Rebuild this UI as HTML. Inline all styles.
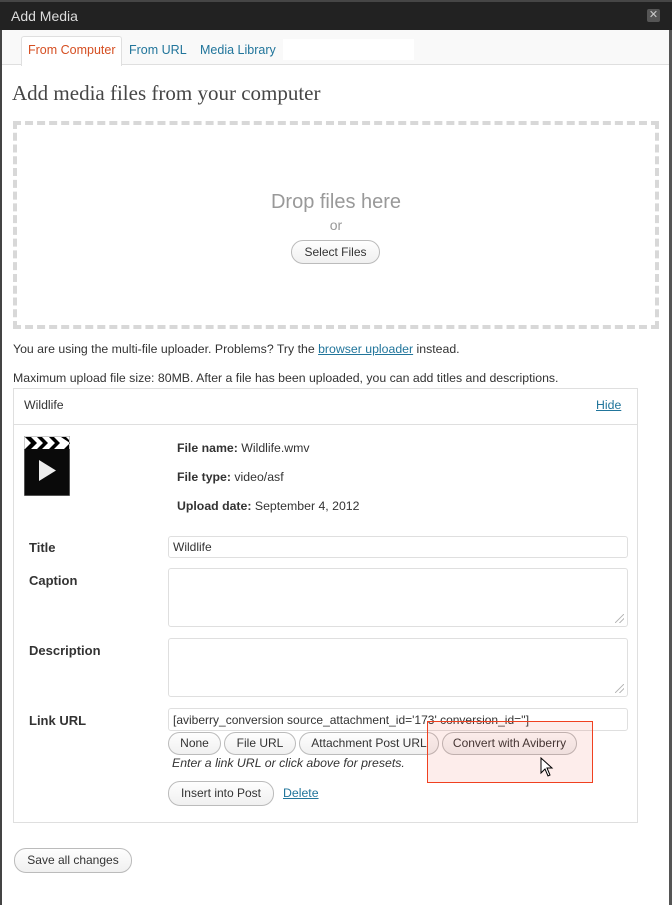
<!DOCTYPE html>
<html><head><meta charset="utf-8"><style>
*{box-sizing:border-box;margin:0;padding:0}
body{width:672px;height:905px;background:#fff;position:relative;overflow:hidden;font-family:"Liberation Sans",Arial,sans-serif;font-size:12.3px;color:#333}
.a{position:absolute}
.btn{position:absolute;height:23px;border:1px solid #bbb;border-radius:12px;background:linear-gradient(#fefefe,#f0f0f0);font-size:12px;color:#333;text-align:center;line-height:21px;white-space:nowrap}
.inp{position:absolute;border:1px solid #dfdfdf;border-radius:3px;background:#fff}
.lbl{position:absolute;left:29px;font-weight:bold;font-size:13px;color:#333}
a{color:#21759b}
.grip{position:absolute;right:3px;bottom:3px;width:9px;height:9px;background:linear-gradient(135deg,transparent 45%,#bbb 45%,#bbb 55%,transparent 55%,transparent 70%,#bbb 70%,#bbb 80%,transparent 80%)}
</style></head><body>
<div class="a" style="left:0;top:0;width:672px;height:905px;border-left:2px solid #444;border-right:3px solid #555"></div>
<div class="a" style="left:0;top:0;width:672px;height:30px;background:#222;border-top:2px solid #464646"></div>
<div class="a" style="left:11px;top:8px;color:#ddd;font-size:14px">Add Media</div>
<div class="a" style="left:647px;top:9px;width:13px;height:13px;background:#555;border-radius:2px;color:#ccc;font-size:11px;line-height:13px;text-align:center">✕</div>
<div class="a" style="left:2px;top:30px;width:667px;height:35px;background:#f9f9f9;border-bottom:1px solid #dfdfdf"></div>
<div class="a" style="left:21px;top:36px;width:101px;height:30px;background:#fff;border:1px solid #dfdfdf;border-bottom:none;border-radius:3px 3px 0 0"></div>
<div class="a" style="left:28px;top:43px;color:#d54e21;font-size:12.5px">From Computer</div>
<div class="a" style="left:129px;top:43px;color:#21759b;font-size:12.5px">From URL</div>
<div class="a" style="left:200px;top:43px;color:#21759b;font-size:12.5px">Media Library</div>
<div class="a" style="left:283px;top:39px;width:131px;height:21px;background:#fff"></div>
<div class="a" style="left:12px;top:81px;font-family:'Liberation Serif',Georgia,serif;font-size:21px;color:#464646">Add media files from your computer</div>
<div class="a" style="left:13px;top:121px;width:646px;height:208px;border:4px dashed #d8d8d8"></div>
<div class="a" style="left:13px;top:191px;width:646px;text-align:center;font-size:20px;color:#999">Drop files here</div>
<div class="a" style="left:13px;top:217px;width:646px;text-align:center;font-size:14px;color:#999">or</div>
<div class="btn" style="left:291px;top:240px;width:89px;height:24px;line-height:22px">Select Files</div>
<div class="a" style="left:13px;top:342px">You are using the multi-file uploader. Problems? Try the <a href="#">browser uploader</a> instead.</div>
<div class="a" style="left:13px;top:371px">Maximum upload file size: 80MB. After a file has been uploaded, you can add titles and descriptions.</div>
<div class="a" style="left:13px;top:388px;width:625px;height:435px;border:1px solid #dfdfdf"></div>
<div class="a" style="left:14px;top:424px;width:623px;height:1px;background:#dfdfdf"></div>
<div class="a" style="left:24px;top:398px">Wildlife</div>
<div class="a" style="left:596px;top:398px"><a href="#">Hide</a></div>
<svg class="a" style="left:24px;top:436px" width="46" height="60" viewBox="0 0 46 60">
<rect x="0" y="0" width="46" height="60" fill="#111" stroke="#999" stroke-width="1"/>
<rect x="0.5" y="0.5" width="45" height="13" fill="#fff"/>
<path d="M1 1h6l6 6-6 6H1l6-6z M13 1h5l6 6-6 6h-5l6-6z M25 1h5l6 6-6 6h-5l6-6z M37 1h5l3 3v9h-5l6-6z" fill="#000"/>
<rect x="0.5" y="13" width="45" height="46.5" fill="#0a0a0a"/>
<path d="M15 24v21l17-10.5z" fill="#eee"/>
</svg>
<div class="a" style="left:177px;top:441px"><b>File name:</b> Wildlife.wmv</div>
<div class="a" style="left:177px;top:470px"><b>File type:</b> video/asf</div>
<div class="a" style="left:177px;top:499px"><b>Upload date:</b> September 4, 2012</div>
<div class="lbl" style="top:540px">Title</div>
<div class="inp" style="left:168px;top:536px;width:460px;height:22px;padding:3px 4px;font-size:12px">Wildlife</div>
<div class="lbl" style="top:573px">Caption</div>
<div class="inp" style="left:168px;top:568px;width:460px;height:59px"><div class="grip"></div></div>
<div class="lbl" style="top:643px">Description</div>
<div class="inp" style="left:168px;top:638px;width:460px;height:59px"><div class="grip"></div></div>
<div class="lbl" style="top:713px">Link URL</div>
<div class="inp" style="left:168px;top:708px;width:460px;height:23px;padding:4px 4px;font-size:12px;white-space:nowrap;overflow:hidden">[aviberry_conversion source_attachment_id='173' conversion_id='']</div>
<div class="btn" style="left:168px;top:732px;width:53px">None</div>
<div class="btn" style="left:224px;top:732px;width:72px">File URL</div>
<div class="btn" style="left:299px;top:732px;width:140px">Attachment Post URL</div>
<div class="btn" style="left:442px;top:732px;width:135px">Convert with Aviberry</div>
<div class="a" style="left:427px;top:721px;width:166px;height:62px;border:1px solid #f04020;background:rgba(240,80,60,0.1)"></div>
<svg class="a" style="left:540px;top:757px" width="14" height="22" viewBox="0 0 14 22"><path d="M1 1v15l4-4 3 7 2-1-3-7h5z" fill="#fff" stroke="#000" stroke-width="1"/></svg>
<div class="a" style="left:172px;top:756px;font-style:italic">Enter a link URL or click above for presets.</div>
<div class="btn" style="left:168px;top:781px;width:106px;height:25px;line-height:23px">Insert into Post</div>
<div class="a" style="left:283px;top:786px"><a href="#">Delete</a></div>
<div class="btn" style="left:14px;top:848px;width:118px;height:25px;line-height:23px">Save all changes</div>
</body></html>
